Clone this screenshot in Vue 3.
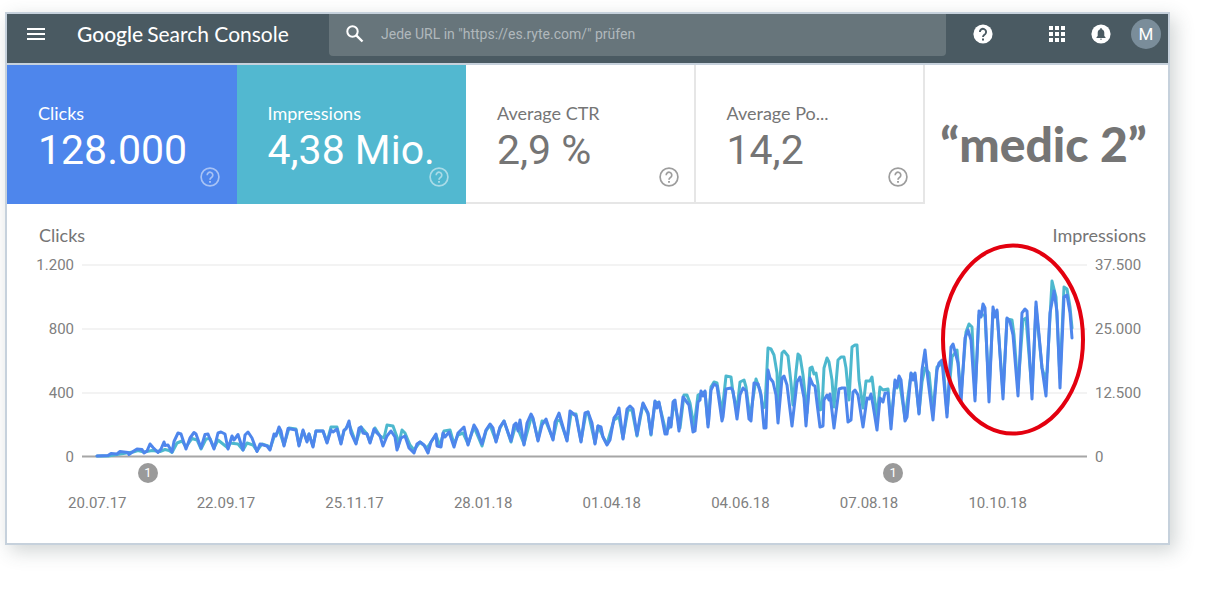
<script setup>
const metrics = [
  { label: 'Clicks', value: '128.000', tone: 'blue' },
  { label: 'Impressions', value: '4,38 Mio.', tone: 'teal' },
  { label: 'Average CTR', value: '2,9 %', tone: 'plain' },
  { label: 'Average Po...', value: '14,2', tone: 'plain' },
]
const clicksScale = ['1.200', '800', '400', '0']
const impressionsScale = ['37.500', '25.000', '12.500', '0']
const dates = ['20.07.17', '22.09.17', '25.11.17', '28.01.18', '01.04.18', '04.06.18', '07.08.18', '10.10.18']
const gridLines = [265, 329, 393]
const notes = [{ at: 6.57 }, { at: 80.7 }]

const clicks = '97,456 108,455.5 111,453.5 117,454 120,451.5 128,452.5 129,454.5 133,451.5 137,449 142,449.5 144,453 147,451 150,444 153,447.5 158,452.5 161,449 164,442 165,445.5 168,445 172,452 174,441.5 178,433 181,434 186,449 190,438 194,432.5 196,434 201,448 205,434.5 208,434 214,449 218,433 221,432 225,434 228,449 232,436 234,440 238,434.5 243,450 245,435 248,432 252,438 257,451.5 260,444 267,446 270,450 274,434 276,436 279,427 281,431 284,446 288,428.5 296,430 299,446 303,430 307,442 309,434 313,447 316,431 323,431 327,443 331,430 333,432 337,429 341,444 344,430 346,429 349,421 351,433 356,444 359,428 361,427 363,433 367,434 370,443 374,429 377,433 380,436 383,446 387,436 391,431 395,437 397,450 401,438 405,436 409,448 414,453 417,444 420,442 424,445 428,453 431,442 436,434 437,446 441,447 443,433 445,437 449,432 454,447 458,433 464,427 468,445 474,425 477,430 482,444 486,430 490,424 493,428 496,442 500,427 504,421 511,441 514,425 516,423 518,431 520,420 524,445 527,423 531,414 533,418 538,441 542,425 546,419 553,440 555,422 559,413 563,427 567,441 570,411 576,416 581,442 585,413 588,412 592,423 595,444 598,426 601,427 603,437 607,445 610,440 614,418 617,414 619,408 623,439 627,409 630,406 633,409 637,435 640,417 643,403 648,413 651,434 655,401 657,408 659,402 665,434 667,434 669,418 671,427 673,402 675,400 679,431 683,397 689,405 693,432 695,431 698,402 700,400 701,391 703,396 705,391 708,427 709,418 711,390 714,384 717,386 722,421 723,417 726,389 731,388 733,391 737,419 740,395 743,388 746,391 749,419 751,421 754,383 758,384 761,395 764,428 766,428 768,370 770,378 773,382 776,395 778,423 782,378 784,376 787,385 792,426 797,382 800,377 804,398 806,426 810,378 813,385 815,386 817,403 820,427 823,426 824,400 827,395 829,400 830,394 834,428 839,389 842,388 845,388 848,422 851,420 853,392 855,390 858,395 863,427 867,398 869,399 871,394 873,405 877,430 880,398 883,402 885,393 888,393 891,429 895,380 897,387 899,376 901,380 905,421 907,417 911,373 913,380 915,373 919,414 922,370 925,350 928,380 933,420 937,370 939,363 942,360 947,417 951,347 953,344 958,363 961,403 965,338 968,330 971,340 975,401 979,311 981,317 983,304 985,308 989,402 993,307 995,317 997,310 1003,399 1007,318 1010,322 1013,335 1018,396 1022,313 1025,309 1027,311 1032,399 1036,302 1042,368 1046,396 1050,313 1054,291 1057,312 1060,388 1064,297 1067,295 1070,313 1072,338'

const impressions = '97,456 108,456 120,454 133,452 138,450.5 144,452 152,450.5 160,451.5 165,449.5 169,450.5 172,452.5 177,443 182,441 186,447 192,438.5 197,440 201,449 206,439 210,438.5 214,448 218,440 223,444 228,448 230,443 238,444 243,450 247,443 253,445 257,451 262,444 268,446 270,449 274,437 279,430 284,445 289,428 296,429 299,445 303,431 307,441 309,434 313,446 316,431 323,431 327,442 331,427 337,427 341,443 344,431 349,424 356,443 361,427 367,434 370,442 375,428 380,436 384,438 387,425 393,426 397,437 398,447 402,430 405,433 410,445 414,450 420,442 427,448 431,442 436,435 440,446 444,431 450,430 454,444 458,435 463,433 468,444 474,427 482,446 486,431 490,425 496,441 500,428 504,421 511,442 516,424 524,444 531,418 533,419 538,440 542,421 546,422 553,439 557,421 560,420 567,440 571,414 576,414 581,441 586,413 588,412 595,443 598,426 603,437 607,444 614,420 619,417 623,438 628,410 632,410 637,436 643,404 648,414 651,435 655,402 659,403 666,432 671,425 674,401 680,428 684,395 687,395 690,403 694,427 698,395 702,393 705,392 708,424 711,387 714,382 717,383 722,413 726,376 731,377 733,393 737,410 740,382 744,380 746,387 750,418 756,379 760,390 763,408 765,407 768,348 771,349 774,355 777,373 778,404 782,353 784,351 788,356 791,383 793,405 796,372 798,354 800,356 803,375 807,413 810,368 812,367 814,374 816,373 818,385 820,410 822,409 824,368 827,358 829,362 832,380 834,407 838,360 841,357 844,357 846,368 849,400 852,347 855,345 857,345 859,380 863,408 866,381 870,381 872,377 875,402 877,417 880,387 883,390 888,389 891,423 895,382 897,388 899,378 905,418 911,374 915,375 919,413 922,382 925,368 929,373 933,413 937,367 943,363 947,413 952,357 957,350 961,395 966,332 969,324 972,327 975,395 979,315 985,315 989,392 993,313 997,312 1003,393 1007,319 1012,320 1014,335 1018,388 1023,320 1026,318 1032,392 1036,307 1042,368 1045,378 1047,372 1052,281 1056,297 1060,378 1064,287 1067,289 1070,307 1072,328'
</script>

<template>
  <main class="frame">
    <header class="topbar">
      <div class="brand">
        <button class="icon-button" aria-label="Menu">
          <svg width="18" height="14" viewBox="0 0 18 14" fill="currentColor"><path d="M0 1h18v2H0zM0 6h18v2H0zM0 11h18v2H0z" /></svg>
        </button>
        <a href="#" class="logo"><strong>Google</strong><span>Search Console</span></a>
      </div>
      <label class="search">
        <svg width="18" height="18" viewBox="0 0 18 18" fill="none" stroke="currentColor" stroke-width="2"><circle cx="6.5" cy="6.5" r="5.2" /><path d="M10.3 10.3l6.2 6.2" stroke-width="2.4" /></svg>
        <input type="text" aria-label="URL prüfen" placeholder="Jede URL in &quot;https://es.ryte.com/&quot; prüfen" />
      </label>
      <nav class="actions">
        <button class="icon-button help-button" aria-label="Hilfe">
          <svg width="20" height="20" viewBox="0 0 20 20"><circle cx="10" cy="10" r="9.6" fill="currentColor" /><path d="M6.9 8a3.1 3.1 0 1 1 5.3 2.1C11 11.200 10 11.500 10 13" fill="none" stroke="#4a5a62" stroke-width="1.900" /><path d="M9 14.500h2v2H9z" fill="#4a5a62" /></svg>
        </button>
        <button class="icon-button" aria-label="Apps">
          <svg width="16" height="16" viewBox="0 0 16 16" fill="currentColor"><path d="M0 0h4v4H0zM6 0h4v4H6zM12 0h4v4h-4zM0 6h4v4H0zM6 6h4v4H6zM12 6h4v4h-4zM0 12h4v4H0zM6 12h4v4H6zM12 12h4v4h-4z" /></svg>
        </button>
        <button class="icon-button" aria-label="Benachrichtigungen">
          <svg width="20" height="20" viewBox="0 0 20 20"><circle cx="10" cy="10" r="9.600" fill="currentColor" /><path d="M5.500 14v-.8l1.200-1.200V8.800c0-1.800 1-3.100 2.500-3.500v-.5a.8.8 0 0 1 1.600 0v.5c1.500.4 2.500 1.700 2.500 3.500V12l1.200 1.200v.8zM9 14.800h2a1 1 0 0 1-2 0z" fill="#4a5a62" /></svg>
        </button>
        <button class="avatar" aria-label="Konto">M</button>
      </nav>
    </header>

    <section class="metrics">
      <button v-for="m in metrics" :key="m.label" class="card" :class="m.tone">
        <span class="card-label">{{ m.label }}</span>
        <span class="card-value">{{ m.value }}</span>
        <svg class="card-help" width="20" height="20" viewBox="0 0 20 20" fill="none" stroke="currentColor"><circle cx="10" cy="10" r="8.900" stroke-width="1.700" /><path d="M7.200 8.200a2.800 2.800 0 1 1 4.700 1.900C10.900 11 10 11.300 10 12.800" stroke-width="1.700" /><path d="M10 13.900v1.900" stroke-width="1.900" /></svg>
      </button>
      <h1 class="headline">“medic 2”</h1>
    </section>

    <section class="chart">
      <div class="titles"><span>Clicks</span><span>Impressions</span></div>
      <div class="plot-row">
        <div class="scale left"><span v-for="s in clicksScale" :key="s">{{ s }}</span></div>
        <div class="plot">
          <svg class="lines" viewBox="82 264 1005 192" preserveAspectRatio="none" role="img" aria-label="Clicks, Impressions">
            <line v-for="y in gridLines" :key="y" x1="82" x2="1087" :y1="y" :y2="y" class="grid" />
            <line x1="82" x2="1087" y1="456.5" y2="456.5" class="base" />
            <polyline :points="impressions" class="series teal-line" />
            <polyline :points="clicks" class="series blue-line" />
            <ellipse cx="1013" cy="339.500" rx="70" ry="94" class="ring" />
          </svg>
          <button v-for="n in notes" :key="n.at" class="note" :style="{ left: n.at + '%' }">1</button>
        </div>
        <div class="scale"><span v-for="s in impressionsScale" :key="s">{{ s }}</span></div>
      </div>
      <div class="dates"><span v-for="d in dates" :key="d">{{ d }}</span></div>
    </section>
  </main>
</template>

<style>
body {
  margin: 0;
  background: #fff;
}
</style>

<style scoped>
* {
  box-sizing: border-box;
}
button {
  margin: 0;
  padding: 0;
  border: 0;
  background: none;
  color: inherit;
  font: inherit;
}
svg {
  display: block;
}
.frame {
  margin: 12px 55px 54px 5px;
  border: 2px solid #c6d1dc;
  background: #fff;
  color: #757575;
  font-family: Roboto, sans-serif;
  box-shadow: 5px 6px 18px rgba(60, 75, 75, 0.24);
}
.topbar {
  display: grid;
  grid-template-columns: 322px 1fr 222px;
  height: 51px;
  border-bottom: 2px solid #c6d1dc;
  background: #4a5a62;
  color: #fff;
}
.brand {
  display: flex;
  align-items: center;
  height: 40px;
  padding-left: 20px;
}
.logo {
  display: flex;
  gap: 4px;
  margin-left: 32px;
  color: #fff;
  font: 21px/28px Lato, sans-serif;
  text-decoration: none;
  white-space: nowrap;
}
.logo strong {
  font-weight: 500;
}
.search {
  display: flex;
  align-items: center;
  gap: 17px;
  height: 42px;
  padding: 0 17px 2px;
  border-radius: 0 0 4px 4px;
  background: #67757b;
}
.search input {
  flex: 1;
  min-width: 0;
  height: 28px;
  padding: 0;
  border: 0;
  outline: 0;
  background: none;
  color: #fff;
  font: 14px Roboto, sans-serif;
}
.search input::placeholder {
  color: #b0b8bc;
  opacity: 1;
}
.actions {
  display: flex;
  align-items: center;
  justify-content: flex-end;
  gap: 20px;
  height: 40px;
  padding-right: 7px;
}
.actions .avatar {
  width: 30px;
  height: 30px;
  border-radius: 50%;
  background: #7a8d9a;
  font-size: 17px;
}
.actions .help-button {
  margin-right: 36px;
}
.actions .icon-button:nth-child(2) {
  margin-right: 6px;
}
.metrics {
  display: grid;
  grid-template-columns: repeat(4, 17fr) 18fr;
  height: 139px;
}
.card {
  position: relative;
  display: flex;
  flex-direction: column;
  padding: 36px 0 0 31px;
  border-style: solid;
  border-width: 0 2px 2px 0;
  border-color: #e6e6e6;
  text-align: left;
  white-space: nowrap;
}
.card.blue,
.card.teal {
  border-color: transparent;
  color: #fff;
}
.blue {
  background: #4e86ec;
}
.teal {
  background: #52b8d0;
}
.card-label {
  font: 18px/24px Lato, sans-serif;
}
.card-value {
  font-size: 41px;
  line-height: 50px;
}
.card-help {
  position: absolute;
  right: 15px;
  bottom: 15px;
  opacity: 0.7;
}
.blue .card-help,
.teal .card-help {
  opacity: 0.5;
}
.headline {
  align-self: center;
  margin: 0;
  padding: 18px 6px 0 0;
  font: 900 48px/48px Lato, sans-serif;
  text-align: center;
  white-space: nowrap;
}
.titles {
  display: flex;
  justify-content: space-between;
  padding: 19px 22px 17px 32px;
  font: 18px/24px Lato, sans-serif;
}
.plot-row {
  display: grid;
  grid-template-columns: 67px 1fr 73px;
  gap: 8px;
  font-size: 15px;
}
.scale {
  display: flex;
  flex-direction: column;
  justify-content: space-between;
  margin: -8px 0 -10px;
  line-height: 18px;
  color: #808080;
}
.left {
  text-align: right;
}
.plot {
  position: relative;
  height: 192px;
}
.lines {
  width: 100%;
  height: 100%;
  overflow: visible;
}
.lines * {
  fill: none;
  vector-effect: non-scaling-stroke;
}
.grid {
  stroke: #f3f3f3;
  stroke-width: 2;
}
.base {
  stroke: #a6a6a6;
  stroke-width: 2;
}
.series {
  stroke-width: 3;
  stroke-linejoin: round;
  stroke-linecap: round;
}
.teal-line {
  stroke: #4db8ce;
}
.blue-line {
  stroke: #4e86ec;
}
.ring {
  stroke: #e3000f;
  stroke-width: 4;
}
.note {
  position: absolute;
  top: 199px;
  width: 20px;
  height: 20px;
  margin-left: -10px;
  border-radius: 50%;
  background: #9a9a9a;
  color: #fff;
  font-size: 13px;
  line-height: 18px;
}
.dates {
  display: grid;
  grid-template-columns: repeat(8, 1fr);
  padding: 37px 106px 30px 26px;
  color: #808080;
  font-size: 15px;
  line-height: 20px;
  text-align: center;
}
</style>
